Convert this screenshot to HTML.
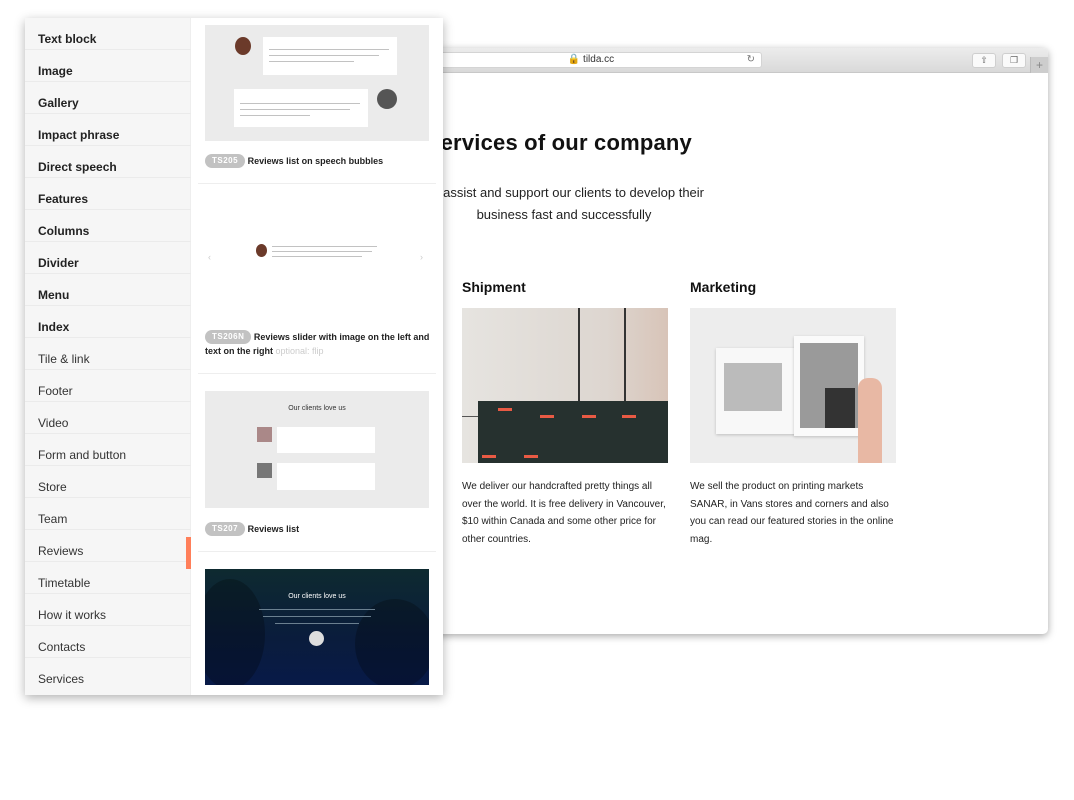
<!DOCTYPE html>
<html><head><meta charset="utf-8"><style>
*{margin:0;padding:0;box-sizing:border-box}
body{width:1074px;height:800px;background:#fff;position:relative;overflow:hidden;font-family:"Liberation Sans",sans-serif;color:#111}
.abs{position:absolute}
.browser{left:420px;top:48px;width:628px;height:586px;background:#fff;border-radius:5px;box-shadow:0 2px 8px rgba(0,0,0,.35);overflow:hidden}
.tb{left:0;top:0;width:628px;height:25px;background:linear-gradient(#ececec,#d9d9d9);border-bottom:1px solid #c8c8c8}
.url{left:0;top:4px;width:342px;height:16px;background:#fff;border-radius:3px;border:1px solid #d4d4d4;font-size:10px;text-align:center;line-height:14px;color:#333}
.btn{top:5px;width:24px;height:15px;background:#fafafa;border:1px solid #cfcfcf;border-radius:3px;font-size:9px;text-align:center;line-height:13px;color:#666}
.panel{left:25px;top:18px;width:418px;height:677px;background:#fff;box-shadow:0 3px 10px rgba(0,0,0,.3)}
.menu{left:0;top:0;width:166px;height:677px;background:#f6f6f6;border-right:1px solid #eee}
.mi{position:absolute;left:0;width:166px;height:32px;border-bottom:1px solid #ebebeb;padding-left:13px;line-height:42px;font-size:12px;color:#333}
.mi.b{font-weight:bold;color:#222}
.thumb{background:#ebebeb}
.tag{display:inline-block;background:#c2c2c2;color:#fff;font-size:8px;font-weight:bold;border-radius:8px;padding:0 7px;height:14px;line-height:14px;letter-spacing:.5px;vertical-align:1px}
.cap{font-size:9px;font-weight:bold;color:#222}
.bubble{background:#fff}
.line{height:1px;background:#999;opacity:.6}
.sep{height:1px;background:#eee}
p.t{font-size:10px;line-height:17.5px;color:#222}
</style></head><body>

<div class="abs browser">
 <div class="abs tb">
  <div class="abs url">🔒 tilda.cc<span style="position:absolute;right:6px;top:0;color:#777">↻</span></div>
  <div class="abs btn" style="left:552px">⇧</div>
  <div class="abs btn" style="left:582px">❐</div>
  <div class="abs" style="left:610px;top:9px;width:18px;height:16px;background:#cdcdcd;border-left:1px solid #bbb;font-size:12px;color:#888;text-align:center;line-height:16px">+</div>
 </div>
 <div class="abs" style="left:0;top:82px;width:272px;text-align:right;font-size:22px;font-weight:bold;color:#111;letter-spacing:.2px;white-space:nowrap">Services of our company</div>
 <div class="abs" style="left:0;top:137px;width:284px;text-align:right;font-size:13px;color:#222;white-space:nowrap">We assist and support our clients to develop their</div>
 <div class="abs" style="left:44px;top:159px;width:200px;text-align:center;font-size:13px;color:#222;white-space:nowrap">business fast and successfully</div>
 <div class="abs" style="left:42px;top:231px;font-size:14px;font-weight:bold">Shipment</div>
 <div class="abs" style="left:270px;top:231px;font-size:14px;font-weight:bold">Marketing</div>
 <div class="abs" style="left:42px;top:260px;width:206px;height:155px;background:linear-gradient(90deg,#e6e4e0,#ddd6d0 70%,#d8c4b8);overflow:hidden">
  <div class="abs" style="left:116px;top:0;width:2px;height:95px;background:#333"></div>
  <div class="abs" style="left:162px;top:0;width:2px;height:95px;background:#333"></div>
  <div class="abs" style="left:0;top:108px;width:20px;height:1px;background:#555"></div>
  <div class="abs" style="left:16px;top:93px;width:190px;height:62px;background:#26312f"></div>
  <div class="abs" style="left:36px;top:100px;width:14px;height:3px;background:#e85a44"></div>
  <div class="abs" style="left:78px;top:107px;width:14px;height:3px;background:#e85a44"></div>
  <div class="abs" style="left:120px;top:107px;width:14px;height:3px;background:#e85a44"></div>
  <div class="abs" style="left:160px;top:107px;width:14px;height:3px;background:#e85a44"></div>
  <div class="abs" style="left:20px;top:147px;width:14px;height:3px;background:#e85a44"></div>
  <div class="abs" style="left:62px;top:147px;width:14px;height:3px;background:#e85a44"></div>
 </div>
 <div class="abs" style="left:270px;top:260px;width:206px;height:155px;background:#ededed;overflow:hidden">
  <div class="abs" style="left:26px;top:40px;width:80px;height:86px;background:#f8f8f8;box-shadow:0 1px 3px rgba(0,0,0,.2)"></div>
  <div class="abs" style="left:34px;top:55px;width:58px;height:48px;background:#bbb"></div>
  <div class="abs" style="left:104px;top:28px;width:70px;height:100px;background:#fafafa;box-shadow:0 1px 3px rgba(0,0,0,.2)"></div>
  <div class="abs" style="left:110px;top:35px;width:58px;height:85px;background:#9a9a9a"></div>
  <div class="abs" style="left:135px;top:80px;width:30px;height:40px;background:#333"></div>
  <div class="abs" style="left:168px;top:70px;width:24px;height:85px;background:#e8b8a4;border-radius:10px 10px 0 0"></div>
 </div>
 <p class="abs t" style="left:42px;top:430px;width:210px">We deliver our handcrafted pretty things all over the world. It is free delivery in Vancouver, $10 within Canada and some other price for other countries.</p>
 <p class="abs t" style="left:270px;top:430px;width:210px">We sell the product on printing markets SANAR, in Vans stores and corners and also you can read our featured stories in the online mag.</p>
</div>

<div class="abs panel">
 <div class="abs menu">
  <div class="mi b" style="top:0">Text block</div>
  <div class="mi b" style="top:32px">Image</div>
  <div class="mi b" style="top:64px">Gallery</div>
  <div class="mi b" style="top:96px">Impact phrase</div>
  <div class="mi b" style="top:128px">Direct speech</div>
  <div class="mi b" style="top:160px">Features</div>
  <div class="mi b" style="top:192px">Columns</div>
  <div class="mi b" style="top:224px">Divider</div>
  <div class="mi b" style="top:256px">Menu</div>
  <div class="mi b" style="top:288px">Index</div>
  <div class="mi" style="top:320px">Tile &amp; link</div>
  <div class="mi" style="top:352px">Footer</div>
  <div class="mi" style="top:384px">Video</div>
  <div class="mi" style="top:416px">Form and button</div>
  <div class="mi" style="top:448px">Store</div>
  <div class="mi" style="top:480px">Team</div>
  <div class="mi" style="top:512px">Reviews</div>
  <div class="mi" style="top:544px">Timetable</div>
  <div class="mi" style="top:576px">How it works</div>
  <div class="mi" style="top:608px">Contacts</div>
  <div class="mi" style="top:640px;border:0">Services</div>
  <div class="abs" style="left:161px;top:519px;width:5px;height:32px;background:#ff7f5a"></div>
 </div>

 <div class="abs thumb" style="left:180px;top:7px;width:224px;height:116px">
  <div class="abs" style="left:30px;top:12px;width:16px;height:18px;border-radius:50%;background:#6b3a2a"></div>
  <div class="abs bubble" style="left:58px;top:12px;width:134px;height:38px"><div class="abs line" style="left:6px;top:12px;width:120px"></div><div class="abs line" style="left:6px;top:18px;width:110px"></div><div class="abs line" style="left:6px;top:24px;width:85px"></div></div>
  <div class="abs bubble" style="left:29px;top:64px;width:134px;height:38px"><div class="abs line" style="left:6px;top:14px;width:120px"></div><div class="abs line" style="left:6px;top:20px;width:110px"></div><div class="abs line" style="left:6px;top:26px;width:70px"></div></div>
  <div class="abs" style="left:172px;top:64px;width:20px;height:20px;border-radius:50%;background:#555"></div>
 </div>
 <div class="abs cap" style="left:180px;top:136px"><span class="tag">TS205</span> Reviews list on speech bubbles</div>
 <div class="abs sep" style="left:173px;top:165px;width:238px"></div>

 <div class="abs" style="left:183px;top:234px;font-size:9px;color:#ccc">‹</div>
 <div class="abs" style="left:395px;top:234px;font-size:9px;color:#ccc">›</div>
 <div class="abs" style="left:231px;top:226px;width:11px;height:13px;border-radius:50%;background:#6b3a2a"></div>
 <div class="abs line" style="left:247px;top:228px;width:105px"></div>
 <div class="abs line" style="left:247px;top:233px;width:100px"></div>
 <div class="abs line" style="left:247px;top:238px;width:90px"></div>
 <div class="abs cap" style="left:180px;top:312px;width:232px;line-height:14px"><span class="tag">TS206N</span> Reviews slider with image on the left and text on the right <span style="color:#ccc;font-weight:normal">optional: flip</span></div>
 <div class="abs sep" style="left:173px;top:355px;width:238px"></div>

 <div class="abs thumb" style="left:180px;top:373px;width:224px;height:117px">
  <div class="abs" style="left:0;top:14px;width:224px;text-align:center;font-size:7px;color:#333">Our clients love us</div>
  <div class="abs" style="left:52px;top:36px;width:15px;height:15px;background:#a88"></div>
  <div class="abs bubble" style="left:72px;top:36px;width:98px;height:26px"></div>
  <div class="abs" style="left:52px;top:72px;width:15px;height:15px;background:#777"></div>
  <div class="abs bubble" style="left:72px;top:72px;width:98px;height:27px"></div>
 </div>
 <div class="abs cap" style="left:180px;top:504px"><span class="tag">TS207</span> Reviews list</div>
 <div class="abs sep" style="left:173px;top:533px;width:238px"></div>

 <div class="abs" style="left:180px;top:551px;width:224px;height:116px;background:linear-gradient(#0e2a30,#0a1c3c 60%,#081a48);overflow:hidden">
  <div class="abs" style="left:-10px;top:10px;width:70px;height:110px;border-radius:50%;background:rgba(0,0,0,.25)"></div>
  <div class="abs" style="left:150px;top:30px;width:80px;height:90px;border-radius:50%;background:rgba(0,0,0,.25)"></div>
  <div class="abs" style="left:0;top:24px;width:224px;text-align:center;font-size:7px;color:#fff">Our clients love us</div>
  <div class="abs" style="left:54px;top:40px;width:116px;height:1px;background:#6b8090"></div>
  <div class="abs" style="left:58px;top:47px;width:108px;height:1px;background:#6b8090"></div>
  <div class="abs" style="left:70px;top:54px;width:84px;height:1px;background:#6b8090"></div>
  <div class="abs" style="left:104px;top:62px;width:15px;height:15px;border-radius:50%;background:#ddd"></div>
 </div>
</div>
</body></html>
